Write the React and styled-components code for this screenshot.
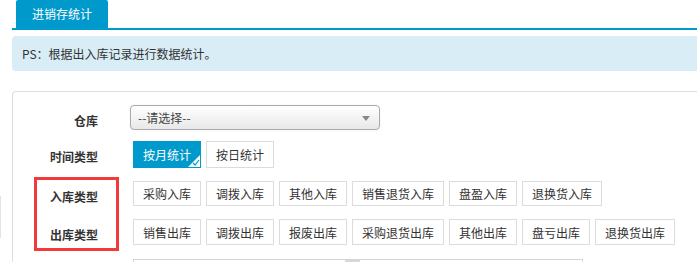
import React from "react";
import styled, { createGlobalStyle } from "styled-components";

const Global = createGlobalStyle`
  html, body { margin: 0; padding: 0; background: #fff; overflow: hidden; }
  body { font-family: "Noto Sans CJK SC", "Liberation Sans", sans-serif; font-size: 12px; color: #333; }
`;

const Page = styled.div`
  position: relative;
  width: 697px;
  height: 262px;
  overflow: hidden;
  padding-left: 12px;
  box-sizing: border-box;
`;

const TabBar = styled.div`
  display: flex;
  padding-left: 4px;
  height: 28px;
  border-bottom: 2px solid #0099cc;
`;

const Tab = styled.div`
  width: 92px;
  height: 28px;
  background: #0099cc;
  color: #fff;
  border-radius: 2px 2px 0 0;
  display: flex;
  align-items: center;
  justify-content: center;
  font-size: 12px;
  line-height: 14px;
`;

const Info = styled.div`
  margin-top: 6px;
  margin-right: -10px;
  height: 35px;
  background: #d9edf7;
  border-radius: 4px 0 0 4px;
  padding-left: 10px;
  display: flex;
  align-items: center;
  font-size: 12px;
  color: #333;
`;

const Panel = styled.div`
  position: relative;
  margin-top: 20px;
  margin-right: -10px;
  border: 1px solid #dedede;
  border-bottom: none;
  border-radius: 4px 0 0 0;
  padding-top: 13px;
  height: 200px;
`;

const Row = styled.div`
  display: flex;
  align-items: flex-start;
  margin-bottom: ${(p) => p.$mb}px;
`;

const Label = styled.div`
  width: 117px;
  flex: none;
  box-sizing: border-box;
  padding-right: 32px;
  padding-top: 9px;
  text-align: right;
  font-weight: bold;
  font-size: 12px;
  line-height: 14px;
  color: #333;
`;

const Select = styled.div`
  position: relative;
  width: 250px;
  height: 25px;
  box-sizing: border-box;
  border: 1px solid #aaa;
  border-radius: 4px;
  background: linear-gradient(#ffffff 0%, #f4f4f4 50%, #e8e8e8 100%);
  box-shadow: 0 0 2px rgba(0,0,0,0.08);
  padding-left: 7px;
  display: flex;
  align-items: center;
  font-size: 12px;
  color: #444;
`;

const Arrow = styled.span`
  position: absolute;
  right: 9px;
  top: 10px;
  width: 0;
  height: 0;
  border-left: 4px solid transparent;
  border-right: 4px solid transparent;
  border-top: 5px solid #888;
`;

const Group = styled.div`
  display: flex;
  gap: 5px;
  padding-left: 3px;
`;

const Btn = styled.div`
  position: relative;
  height: ${(p) => p.$h}px;
  box-sizing: border-box;
  padding: 0 9px;
  border: 1px solid ${(p) => (p.$active ? "#0099cc" : "#dcdcdc")};
  background: ${(p) => (p.$active ? "#0099cc" : "#fff")};
  color: ${(p) => (p.$active ? "#fff" : "#333")};
  display: flex;
  align-items: center;
  font-size: 12px;
  white-space: nowrap;
`;

const Corner = styled.svg`
  position: absolute;
  right: 0;
  bottom: 0;
`;

const Bottom = styled.div`
  position: relative;
  margin-left: 120px;
  width: 450px;
  height: 20px;
  box-sizing: border-box;
  border: 1px solid #d4d4d4;
  border-bottom: none;
`;

const BottomThumb = styled.div`
  position: absolute;
  left: 211px;
  top: 0;
  width: 15px;
  height: 20px;
  background: #d8d8d8;
`;

const Annot = styled.div`
  position: absolute;
  left: 21px;
  top: 85px;
  width: 85px;
  height: 74px;
  box-sizing: border-box;
  border: 3px solid #f23a3a;
  pointer-events: none;
`;

const EdgeLine = styled.div`
  position: absolute;
  left: 0;
  top: 196px;
  width: 1px;
  height: 42px;
  background: #e4e4e4;
`;

const inTypes = ["采购入库", "调拨入库", "其他入库", "销售退货入库", "盘盈入库", "退换货入库"];
const outTypes = ["销售出库", "调拨出库", "报废出库", "采购退货出库", "其他出库", "盘亏出库", "退换货出库"];

export default function App() {
  return (
    <>
      <Global />
      <Page>
        <EdgeLine />
        <TabBar>
          <Tab>进销存统计</Tab>
        </TabBar>
        <Info>PS：根据出入库记录进行数据统计。</Info>
        <Panel>
          <Row $mb={11}>
            <Label>仓库</Label>
            <Select>
              --请选择--
              <Arrow />
            </Select>
          </Row>
          <Row $mb={13}>
            <Label>时间类型</Label>
            <Group>
              <Btn $h={27} $active>
                按月统计
                <Corner width="12" height="12" viewBox="0 0 12 12">
                  <polygon points="12,0 12,12 0,12" fill="#fff" />
                  <polyline points="5,8 7,10 11,5" fill="none" stroke="#0099cc" strokeWidth="1.2" />
                </Corner>
              </Btn>
              <Btn $h={27}>按日统计</Btn>
            </Group>
          </Row>
          <Row $mb={13}>
            <Label>入库类型</Label>
            <Group>
              {inTypes.map((t) => (
                <Btn key={t} $h={25}>{t}</Btn>
              ))}
            </Group>
          </Row>
          <Row $mb={14}>
            <Label>出库类型</Label>
            <Group>
              {outTypes.map((t) => (
                <Btn key={t} $h={26}>{t}</Btn>
              ))}
            </Group>
          </Row>
          <Bottom>
            <BottomThumb />
          </Bottom>
          <Annot />
        </Panel>
      </Page>
    </>
  );
}
